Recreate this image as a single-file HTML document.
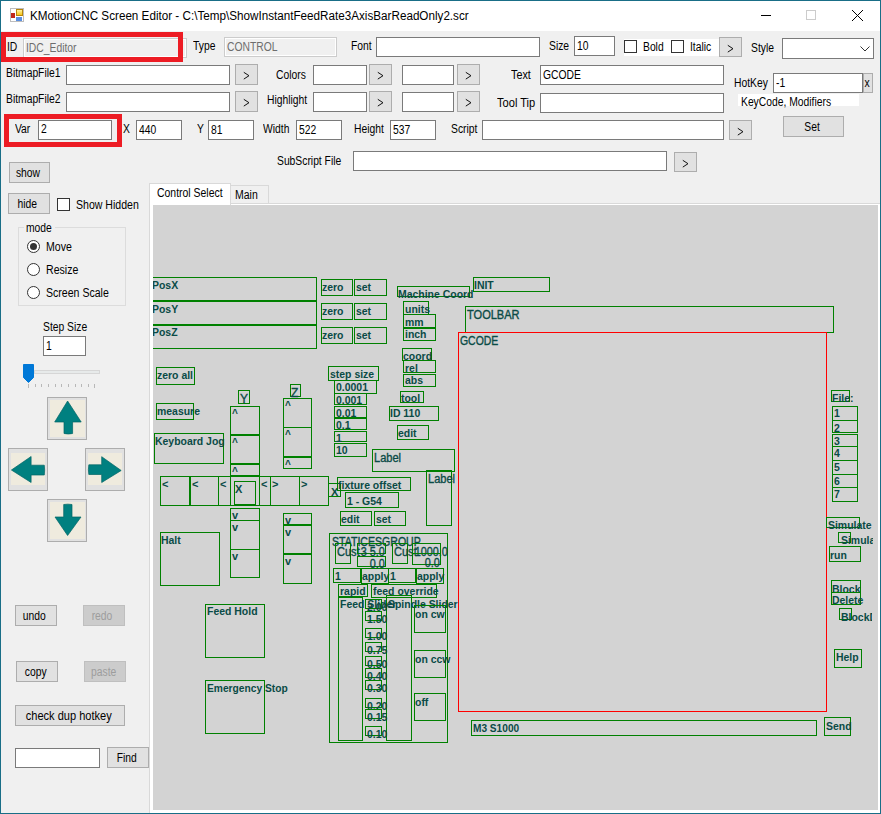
<!DOCTYPE html>
<html><head><meta charset="utf-8"><style>
html,body{margin:0;padding:0;width:881px;height:814px;overflow:hidden;background:#f0f0f0}
body{position:relative;font-family:"Liberation Sans",sans-serif}
.b{position:absolute;box-sizing:border-box}
.t{position:absolute;white-space:nowrap;line-height:normal;transform-origin:left top;font-family:"Liberation Sans",sans-serif}
.cv{position:absolute;left:153px;top:205px;width:725px;height:605px;background:#d3d3d3;overflow:hidden}
</style></head><body>
<div class=b style="left:0px;top:0px;width:881px;height:814px;background:#f0f0f0;"></div>
<div class=b style="left:1px;top:1px;width:879px;height:30px;background:#fff;"></div>
<div class=b style="left:10px;top:8px;width:14px;height:14px;border:1px solid #bdbdbd;background:#fff;"></div>
<div class=b style="left:16px;top:9px;width:7px;height:7px;border:1px solid #b8860b;background:linear-gradient(#fff3a0,#f5c518);"></div>
<div class=b style="left:11px;top:13px;width:4px;height:5px;background:#c0281c;"></div>
<div class=b style="left:16px;top:17px;width:6px;height:4px;background:#5b8fe0;"></div>
<div class=t style="left:30px;top:9px;font-size:12px;transform:scaleX(0.973);">KMotionCNC Screen Editor - C:\Temp\ShowInstantFeedRate3AxisBarReadOnly2.scr</div>
<div class=b style="left:761px;top:15px;width:10px;height:1px;background:#000;"></div>
<div class=b style="left:806px;top:10px;width:10px;height:10px;border:1px solid #cccccc;"></div>
<svg class=b style="left:852px;top:10px" width="11" height="11" viewBox="0 0 11 11"><path d="M0 0L11 11M11 0L0 11" stroke="#000" stroke-width="1"/></svg>
<div class=b style="left:23px;top:38px;width:164px;height:20px;border:1px solid #cccccc;background:#f0f0f0;box-shadow:inset 1px 1px 0 #fff,inset -1px -1px 0 #fff;"></div>
<div class=t style="left:26px;top:41px;font-size:12px;color:#6d6d6d;transform:scaleX(0.86);">IDC_Editor</div>
<div class=b style="left:1px;top:32px;width:182px;height:30px;border:5px solid #ed1c24;"></div>
<div class=t style="left:7px;top:40px;font-size:12px;transform:scaleX(0.86);">ID</div>
<div class=t style="left:193px;top:39px;font-size:12px;transform:scaleX(0.86);">Type</div>
<div class=b style="left:224px;top:37px;width:113px;height:20px;border:1px solid #cccccc;background:#f0f0f0;box-shadow:inset 1px 1px 0 #fff,inset -1px -1px 0 #fff;"></div>
<div class=t style="left:227px;top:40px;font-size:12px;color:#6d6d6d;transform:scaleX(0.86);">CONTROL</div>
<div class=t style="left:351px;top:39px;font-size:12px;transform:scaleX(0.86);">Font</div>
<div class=b style="left:376px;top:37px;width:164px;height:20px;border:1px solid #7a7a7a;background:#fff;"></div>
<div class=t style="left:549px;top:39px;font-size:12px;transform:scaleX(0.86);">Size</div>
<div class=b style="left:574px;top:36px;width:41px;height:20px;border:1px solid #7a7a7a;background:#fff;"></div>
<div class=t style="left:577px;top:39px;font-size:12px;transform:scaleX(0.86);">10</div>
<div class=b style="left:624px;top:39px;width:95px;height:17px;background:#fff;"></div>
<div class=b style="left:624px;top:40px;width:13px;height:13px;border:1px solid #333;"></div>
<div class=t style="left:643px;top:40px;font-size:12px;transform:scaleX(0.86);">Bold</div>
<div class=b style="left:671px;top:40px;width:13px;height:13px;border:1px solid #333;"></div>
<div class=t style="left:690px;top:40px;font-size:12px;transform:scaleX(0.86);">Italic</div>
<div class=b style="left:719px;top:37px;width:23px;height:20px;border:1px solid #adadad;background:#e1e1e1;"></div>
<svg class=b style="left:727px;top:44px" width="8" height="9" viewBox="0 0 8 9"><path d="M0.8 1.3L6 4.7L0.8 8.1" stroke="#111" fill="none" stroke-width="1"/></svg>
<div class=t style="left:751px;top:41px;font-size:12px;transform:scaleX(0.86);">Style</div>
<div class=b style="left:782px;top:38px;width:92px;height:21px;border:1px solid #7a7a7a;background:#fff;"></div>
<svg class=b style="left:860px;top:46px" width="10" height="6" viewBox="0 0 10 6"><path d="M0.5 0.5L5 5L9.5 0.5" stroke="#333" fill="none" stroke-width="1"/></svg>
<div class=t style="left:6px;top:66px;font-size:12px;transform:scaleX(0.86);">BitmapFile1</div>
<div class=b style="left:66px;top:65px;width:164px;height:20px;border:1px solid #7a7a7a;background:#fff;"></div>
<div class=b style="left:235px;top:64px;width:23px;height:21px;border:1px solid #adadad;background:#e1e1e1;"></div>
<svg class=b style="left:243px;top:71px" width="8" height="9" viewBox="0 0 8 9"><path d="M0.8 1.3L6 4.7L0.8 8.1" stroke="#111" fill="none" stroke-width="1"/></svg>
<div class=t style="left:276px;top:68px;font-size:12px;transform:scaleX(0.86);">Colors</div>
<div class=b style="left:313px;top:65px;width:54px;height:20px;border:1px solid #7a7a7a;background:#fff;"></div>
<div class=b style="left:369px;top:64px;width:23px;height:21px;border:1px solid #adadad;background:#e1e1e1;"></div>
<svg class=b style="left:377px;top:71px" width="8" height="9" viewBox="0 0 8 9"><path d="M0.8 1.3L6 4.7L0.8 8.1" stroke="#111" fill="none" stroke-width="1"/></svg>
<div class=b style="left:402px;top:65px;width:52px;height:20px;border:1px solid #7a7a7a;background:#fff;"></div>
<div class=b style="left:457px;top:64px;width:23px;height:21px;border:1px solid #adadad;background:#e1e1e1;"></div>
<svg class=b style="left:465px;top:71px" width="8" height="9" viewBox="0 0 8 9"><path d="M0.8 1.3L6 4.7L0.8 8.1" stroke="#111" fill="none" stroke-width="1"/></svg>
<div class=t style="left:511px;top:68px;font-size:12px;transform:scaleX(0.9);">Text</div>
<div class=b style="left:540px;top:65px;width:184px;height:20px;border:1px solid #7a7a7a;background:#fff;"></div>
<div class=t style="left:543px;top:68px;font-size:12px;transform:scaleX(0.86);">GCODE</div>
<div class=t style="left:734px;top:76px;font-size:12px;transform:scaleX(0.86);">HotKey</div>
<div class=b style="left:773px;top:73px;width:90px;height:20px;border:1px solid #7a7a7a;background:#fff;"></div>
<div class=t style="left:776px;top:76px;font-size:12px;transform:scaleX(0.86);">-1</div>
<div class=b style="left:863px;top:73px;width:10px;height:20px;border:1px solid #adadad;background:#e1e1e1;"></div>
<div class=t style="left:861px;width:11px;top:76px;font-size:12px;text-align:center;"><span style="display:inline-block;transform:scaleX(0.86)">x</span></div>
<div class=t style="left:6px;top:92px;font-size:12px;transform:scaleX(0.86);">BitmapFile2</div>
<div class=b style="left:66px;top:92px;width:164px;height:20px;border:1px solid #7a7a7a;background:#fff;"></div>
<div class=b style="left:235px;top:91px;width:23px;height:21px;border:1px solid #adadad;background:#e1e1e1;"></div>
<svg class=b style="left:243px;top:98px" width="8" height="9" viewBox="0 0 8 9"><path d="M0.8 1.3L6 4.7L0.8 8.1" stroke="#111" fill="none" stroke-width="1"/></svg>
<div class=t style="left:267px;top:93px;font-size:12px;transform:scaleX(0.86);">Highlight</div>
<div class=b style="left:313px;top:92px;width:54px;height:20px;border:1px solid #7a7a7a;background:#fff;"></div>
<div class=b style="left:369px;top:91px;width:23px;height:21px;border:1px solid #adadad;background:#e1e1e1;"></div>
<svg class=b style="left:377px;top:98px" width="8" height="9" viewBox="0 0 8 9"><path d="M0.8 1.3L6 4.7L0.8 8.1" stroke="#111" fill="none" stroke-width="1"/></svg>
<div class=b style="left:402px;top:92px;width:52px;height:20px;border:1px solid #7a7a7a;background:#fff;"></div>
<div class=b style="left:457px;top:91px;width:23px;height:21px;border:1px solid #adadad;background:#e1e1e1;"></div>
<svg class=b style="left:465px;top:98px" width="8" height="9" viewBox="0 0 8 9"><path d="M0.8 1.3L6 4.7L0.8 8.1" stroke="#111" fill="none" stroke-width="1"/></svg>
<div class=t style="left:497px;top:96px;font-size:12px;transform:scaleX(0.925);">Tool Tip</div>
<div class=b style="left:540px;top:93px;width:184px;height:20px;border:1px solid #7a7a7a;background:#fff;"></div>
<div class=b style="left:738px;top:94px;width:121px;height:12px;background:#fff;"></div>
<div class=t style="left:741px;top:95px;font-size:12px;transform:scaleX(0.86);">KeyCode, Modifiers</div>
<div class=b style="left:4px;top:114px;width:118px;height:33px;border:5px solid #ed1c24;"></div>
<div class=t style="left:15px;top:122px;font-size:12px;transform:scaleX(0.86);">Var</div>
<div class=b style="left:38px;top:120px;width:74px;height:20px;border:1px solid #7a7a7a;background:#fff;"></div>
<div class=t style="left:41px;top:122px;font-size:12px;transform:scaleX(0.86);">2</div>
<div class=t style="left:123px;top:122px;font-size:12px;transform:scaleX(0.86);">X</div>
<div class=b style="left:136px;top:120px;width:46px;height:20px;border:1px solid #7a7a7a;background:#fff;"></div>
<div class=t style="left:139px;top:123px;font-size:12px;transform:scaleX(0.86);">440</div>
<div class=t style="left:197px;top:122px;font-size:12px;transform:scaleX(0.86);">Y</div>
<div class=b style="left:208px;top:120px;width:46px;height:20px;border:1px solid #7a7a7a;background:#fff;"></div>
<div class=t style="left:211px;top:123px;font-size:12px;transform:scaleX(0.86);">81</div>
<div class=t style="left:263px;top:122px;font-size:12px;transform:scaleX(0.86);">Width</div>
<div class=b style="left:296px;top:120px;width:46px;height:20px;border:1px solid #7a7a7a;background:#fff;"></div>
<div class=t style="left:299px;top:123px;font-size:12px;transform:scaleX(0.86);">522</div>
<div class=t style="left:354px;top:122px;font-size:12px;transform:scaleX(0.86);">Height</div>
<div class=b style="left:390px;top:120px;width:46px;height:20px;border:1px solid #7a7a7a;background:#fff;"></div>
<div class=t style="left:393px;top:123px;font-size:12px;transform:scaleX(0.86);">537</div>
<div class=t style="left:451px;top:122px;font-size:12px;transform:scaleX(0.86);">Script</div>
<div class=b style="left:482px;top:120px;width:242px;height:20px;border:1px solid #7a7a7a;background:#fff;"></div>
<div class=b style="left:729px;top:120px;width:23px;height:20px;border:1px solid #adadad;background:#e1e1e1;"></div>
<svg class=b style="left:737px;top:127px" width="8" height="9" viewBox="0 0 8 9"><path d="M0.8 1.3L6 4.7L0.8 8.1" stroke="#111" fill="none" stroke-width="1"/></svg>
<div class=b style="left:783px;top:116px;width:61px;height:21px;border:1px solid #adadad;background:#e1e1e1;"></div>
<div class=t style="left:781px;width:62px;top:120px;font-size:12px;text-align:center;"><span style="display:inline-block;transform:scaleX(0.86)">Set</span></div>
<div class=t style="left:277px;top:154px;font-size:12px;transform:scaleX(0.86);">SubScript File</div>
<div class=b style="left:353px;top:151px;width:314px;height:20px;border:1px solid #7a7a7a;background:#fff;"></div>
<div class=b style="left:674px;top:152px;width:23px;height:20px;border:1px solid #adadad;background:#e1e1e1;"></div>
<svg class=b style="left:682px;top:159px" width="8" height="9" viewBox="0 0 8 9"><path d="M0.8 1.3L6 4.7L0.8 8.1" stroke="#111" fill="none" stroke-width="1"/></svg>
<div class=b style="left:9px;top:162px;width:41px;height:21px;border:1px solid #adadad;background:#e1e1e1;"></div>
<div class=t style="left:7px;width:42px;top:166px;font-size:12px;text-align:center;"><span style="display:inline-block;transform:scaleX(0.86)">show</span></div>
<div class=b style="left:8px;top:193px;width:42px;height:21px;border:1px solid #adadad;background:#e1e1e1;"></div>
<div class=t style="left:6px;width:43px;top:197px;font-size:12px;text-align:center;"><span style="display:inline-block;transform:scaleX(0.86)">hide</span></div>
<div class=b style="left:57px;top:198px;width:13px;height:13px;border:1px solid #333;background:#fff;"></div>
<div class=t style="left:76px;top:198px;font-size:12px;transform:scaleX(0.88);">Show Hidden</div>
<div class=b style="left:18px;top:227px;width:108px;height:79px;border:1px solid #dcdcdc;"></div>
<div class=b style="left:24px;top:222px;width:31px;height:11px;background:#f0f0f0;"></div>
<div class=t style="left:26px;top:221px;font-size:12px;transform:scaleX(0.86);">mode</div>
<div class=b style="left:27px;top:240px;width:13px;height:13px;border:1px solid #333;border-radius:50%;box-sizing:border-box;background:#fff"></div>
<div class=t style="left:46px;top:240px;font-size:12px;transform:scaleX(0.88);">Move</div>
<div class=b style="left:27px;top:263px;width:13px;height:13px;border:1px solid #333;border-radius:50%;box-sizing:border-box;background:#fff"></div>
<div class=t style="left:46px;top:263px;font-size:12px;transform:scaleX(0.88);">Resize</div>
<div class=b style="left:27px;top:286px;width:13px;height:13px;border:1px solid #333;border-radius:50%;box-sizing:border-box;background:#fff"></div>
<div class=t style="left:46px;top:286px;font-size:12px;transform:scaleX(0.88);">Screen Scale</div>
<div class=b style="left:30px;top:243px;width:7px;height:7px;border-radius:50%;background:#333"></div>
<div class=t style="left:43px;top:320px;font-size:12px;transform:scaleX(0.86);">Step Size</div>
<div class=b style="left:43px;top:336px;width:43px;height:20px;border:1px solid #7a7a7a;background:#fff;"></div>
<div class=t style="left:46px;top:339px;font-size:12px;transform:scaleX(0.86);">1</div>
<div class=b style="left:34px;top:370px;width:66px;height:4px;border:1px solid #d6d6d6;background:#e7eaea;"></div>
<svg class=b style="left:23px;top:364px" width="12" height="20" viewBox="0 0 12 20"><path d="M0.5 0.5H10.5V13.5L5.5 18.5L0.5 13.5Z" fill="#0078d7" stroke="#0078d7"/></svg>
<div class=b style="left:28px;top:384px;width:1px;height:4px;background:#b8b8b8;"></div>
<div class=b style="left:35px;top:384px;width:1px;height:3px;background:#b8b8b8;"></div>
<div class=b style="left:41px;top:384px;width:1px;height:3px;background:#b8b8b8;"></div>
<div class=b style="left:48px;top:384px;width:1px;height:3px;background:#b8b8b8;"></div>
<div class=b style="left:55px;top:384px;width:1px;height:3px;background:#b8b8b8;"></div>
<div class=b style="left:61px;top:384px;width:1px;height:3px;background:#b8b8b8;"></div>
<div class=b style="left:68px;top:384px;width:1px;height:3px;background:#b8b8b8;"></div>
<div class=b style="left:75px;top:384px;width:1px;height:3px;background:#b8b8b8;"></div>
<div class=b style="left:81px;top:384px;width:1px;height:3px;background:#b8b8b8;"></div>
<div class=b style="left:88px;top:384px;width:1px;height:3px;background:#b8b8b8;"></div>
<div class=b style="left:94px;top:384px;width:1px;height:4px;background:#b8b8b8;"></div>
<div class=b style="left:47px;top:397px;width:40px;height:43px;border:1px solid #adadad;background:#e1e1e1;"></div>
<div class=b style="left:50px;top:400px;width:35px;height:37px;background:#efebde;"></div>
<svg class=b style="left:47px;top:397px" width="40" height="43" viewBox="0 0 40 43"><path d="M20.6 4 L34.2 25 L25.6 25 L25.6 36.5 Q21.3 37.5 17 36.5 L17 25 L7.7 25 Z" fill="#008080" stroke="#006464" stroke-width="0.7" stroke-linejoin="round"/></svg>
<div class=b style="left:47px;top:499px;width:40px;height:43px;border:1px solid #adadad;background:#e1e1e1;"></div>
<div class=b style="left:50px;top:502px;width:35px;height:37px;background:#efebde;"></div>
<svg class=b style="left:47px;top:499px" width="40" height="43" viewBox="0 0 40 43"><path d="M20.6 36.5 L34 18 L25 18 L25 5.5 Q20.8 4.8 16.7 5.5 L16.7 18 L8 18 Z" fill="#008080" stroke="#006464" stroke-width="0.7" stroke-linejoin="round"/></svg>
<div class=b style="left:8px;top:448px;width:40px;height:43px;border:1px solid #adadad;background:#e1e1e1;"></div>
<div class=b style="left:11px;top:453px;width:34px;height:32px;background:#efebde;"></div>
<svg class=b style="left:8px;top:448px" width="40" height="43" viewBox="0 0 40 43"><path d="M3.4 22 L23.1 8.5 L23.1 17.2 L36.3 17.2 Q37 22 36.3 27 L23.1 27 L23.1 34.5 Z" fill="#008080" stroke="#006464" stroke-width="0.7" stroke-linejoin="round"/></svg>
<div class=b style="left:85px;top:448px;width:40px;height:43px;border:1px solid #adadad;background:#e1e1e1;"></div>
<div class=b style="left:88px;top:453px;width:34px;height:32px;background:#efebde;"></div>
<svg class=b style="left:85px;top:448px" width="40" height="43" viewBox="0 0 40 43"><path d="M36.2 22.5 L16.7 8.7 L16.7 16.8 L3.8 16.8 Q3 21.6 3.8 26.5 L16.7 26.5 L16.7 34.5 Z" fill="#008080" stroke="#006464" stroke-width="0.7" stroke-linejoin="round"/></svg>
<div class=b style="left:15px;top:605px;width:42px;height:21px;border:1px solid #adadad;background:#e1e1e1;"></div>
<div class=t style="left:13px;width:43px;top:609px;font-size:12px;text-align:center;"><span style="display:inline-block;transform:scaleX(0.86)">undo</span></div>
<div class=b style="left:83px;top:605px;width:42px;height:21px;border:1px solid #bfbfbf;background:#cccccc;"></div>
<div class=t style="left:81px;width:43px;top:609px;font-size:12px;text-align:center;color:#9d9d9d;"><span style="display:inline-block;transform:scaleX(0.86)">redo</span></div>
<div class=b style="left:16px;top:661px;width:42px;height:21px;border:1px solid #adadad;background:#e1e1e1;"></div>
<div class=t style="left:14px;width:43px;top:665px;font-size:12px;text-align:center;"><span style="display:inline-block;transform:scaleX(0.86)">copy</span></div>
<div class=b style="left:84px;top:661px;width:42px;height:21px;border:1px solid #bfbfbf;background:#cccccc;"></div>
<div class=t style="left:82px;width:43px;top:665px;font-size:12px;text-align:center;color:#9d9d9d;"><span style="display:inline-block;transform:scaleX(0.86)">paste</span></div>
<div class=b style="left:15px;top:705px;width:110px;height:21px;border:1px solid #adadad;background:#e1e1e1;"></div>
<div class=t style="left:13px;width:111px;top:709px;font-size:12px;text-align:center;"><span style="display:inline-block;transform:scaleX(0.92)">check dup hotkey</span></div>
<div class=b style="left:15px;top:748px;width:85px;height:20px;border:1px solid #7a7a7a;background:#fff;"></div>
<div class=b style="left:107px;top:747px;width:42px;height:21px;border:1px solid #adadad;background:#e1e1e1;"></div>
<div class=t style="left:105px;width:43px;top:751px;font-size:12px;text-align:center;"><span style="display:inline-block;transform:scaleX(0.86)">Find</span></div>
<div class=b style="left:149px;top:203px;width:732px;height:611px;border:1px solid #d9d9d9;background:#fff;"></div>
<div class=b style="left:149px;top:183px;width:82px;height:22px;border:1px solid #d9d9d9;background:#fff;border-bottom:none;"></div>
<div class=b style="left:230px;top:185px;width:39px;height:19px;border:1px solid #d9d9d9;background:#f0f0f0;"></div>
<div class=t style="left:157px;top:186px;font-size:12px;transform:scaleX(0.87);">Control Select</div>
<div class=t style="left:235px;top:188px;font-size:12px;transform:scaleX(0.875);">Main</div>
<div class=cv>
<div class=b style="left:-3px;top:72px;width:167px;height:24px;border:1px solid #008000;"></div>
<div class=t style="left:-1px;top:74px;font-size:11px;font-weight:bold;color:#0a4b46;transform:scaleX(0.95);">PosX</div>
<div class=b style="left:-3px;top:96px;width:167px;height:24px;border:1px solid #008000;"></div>
<div class=t style="left:-1px;top:98px;font-size:11px;font-weight:bold;color:#0a4b46;transform:scaleX(0.95);">PosY</div>
<div class=b style="left:-3px;top:120px;width:167px;height:24px;border:1px solid #008000;"></div>
<div class=t style="left:-1px;top:121px;font-size:11px;font-weight:bold;color:#0a4b46;transform:scaleX(0.95);">PosZ</div>
<div class=b style="left:168px;top:74px;width:32px;height:17px;border:1px solid #008000;"></div>
<div class=t style="left:169px;top:76px;font-size:11px;font-weight:bold;color:#0a4b46;transform:scaleX(0.95);">zero</div>
<div class=b style="left:201px;top:74px;width:33px;height:17px;border:1px solid #008000;"></div>
<div class=t style="left:203px;top:76px;font-size:11px;font-weight:bold;color:#0a4b46;transform:scaleX(0.95);">set</div>
<div class=b style="left:168px;top:98px;width:32px;height:17px;border:1px solid #008000;"></div>
<div class=t style="left:169px;top:100px;font-size:11px;font-weight:bold;color:#0a4b46;transform:scaleX(0.95);">zero</div>
<div class=b style="left:201px;top:98px;width:33px;height:17px;border:1px solid #008000;"></div>
<div class=t style="left:203px;top:100px;font-size:11px;font-weight:bold;color:#0a4b46;transform:scaleX(0.95);">set</div>
<div class=b style="left:168px;top:122px;width:32px;height:17px;border:1px solid #008000;"></div>
<div class=t style="left:169px;top:124px;font-size:11px;font-weight:bold;color:#0a4b46;transform:scaleX(0.95);">zero</div>
<div class=b style="left:201px;top:122px;width:33px;height:17px;border:1px solid #008000;"></div>
<div class=t style="left:203px;top:124px;font-size:11px;font-weight:bold;color:#0a4b46;transform:scaleX(0.95);">set</div>
<div class=b style="left:244px;top:81px;width:73px;height:11px;border:1px solid #008000;"></div>
<div class=t style="left:245px;top:83px;font-size:11px;font-weight:bold;color:#0a4b46;transform:scaleX(0.95);">Machine Coord</div>
<div class=b style="left:320px;top:72px;width:77px;height:15px;border:1px solid #008000;"></div>
<div class=t style="left:321px;top:74px;font-size:11px;font-weight:bold;color:#0a4b46;transform:scaleX(0.95);">INIT</div>
<div class=b style="left:250px;top:96px;width:26px;height:14px;border:1px solid #008000;"></div>
<div class=t style="left:252px;top:98px;font-size:11px;font-weight:bold;color:#0a4b46;transform:scaleX(0.95);">units</div>
<div class=b style="left:250px;top:109px;width:33px;height:14px;border:1px solid #008000;"></div>
<div class=t style="left:252px;top:111px;font-size:11px;font-weight:bold;color:#0a4b46;transform:scaleX(0.95);">mm</div>
<div class=b style="left:250px;top:123px;width:33px;height:13px;border:1px solid #008000;"></div>
<div class=t style="left:252px;top:123px;font-size:11px;font-weight:bold;color:#0a4b46;transform:scaleX(0.95);">inch</div>
<div class=b style="left:249px;top:143px;width:30px;height:13px;border:1px solid #008000;"></div>
<div class=t style="left:250px;top:145px;font-size:11px;font-weight:bold;color:#0a4b46;transform:scaleX(0.95);">coord</div>
<div class=b style="left:250px;top:155px;width:33px;height:13px;border:1px solid #008000;"></div>
<div class=t style="left:252px;top:157px;font-size:11px;font-weight:bold;color:#0a4b46;transform:scaleX(0.95);">rel</div>
<div class=b style="left:250px;top:169px;width:33px;height:13px;border:1px solid #008000;"></div>
<div class=t style="left:252px;top:169px;font-size:11px;font-weight:bold;color:#0a4b46;transform:scaleX(0.95);">abs</div>
<div class=b style="left:312px;top:101px;width:369px;height:27px;border:1px solid #008000;"></div>
<div class=t style="left:314px;top:103px;font-size:12px;color:#0a4b46;transform:scaleX(0.92);-webkit-text-stroke:0.35px #0a4b46;">TOOLBAR</div>
<div class=b style="left:305px;top:127px;width:369px;height:380px;border:1px solid #ff0000;"></div>
<div class=t style="left:307px;top:129px;font-size:12px;color:#0a4b46;transform:scaleX(0.87);-webkit-text-stroke:0.35px #0a4b46;">GCODE</div>
<div class=b style="left:175px;top:161px;width:51px;height:15px;border:1px solid #008000;"></div>
<div class=t style="left:177px;top:163px;font-size:11px;font-weight:bold;color:#0a4b46;transform:scaleX(0.95);">step size</div>
<div class=b style="left:181px;top:175px;width:43px;height:14px;border:1px solid #008000;"></div>
<div class=t style="left:183px;top:176px;font-size:11px;font-weight:bold;color:#0a4b46;transform:scaleX(0.95);">0.0001</div>
<div class=b style="left:181px;top:188px;width:33px;height:12px;border:1px solid #008000;"></div>
<div class=t style="left:183px;top:189px;font-size:11px;font-weight:bold;color:#0a4b46;transform:scaleX(0.95);">0.001</div>
<div class=b style="left:181px;top:201px;width:33px;height:12px;border:1px solid #008000;"></div>
<div class=t style="left:183px;top:202px;font-size:11px;font-weight:bold;color:#0a4b46;transform:scaleX(0.95);">0.01</div>
<div class=b style="left:181px;top:213px;width:33px;height:12px;border:1px solid #008000;"></div>
<div class=t style="left:183px;top:214px;font-size:11px;font-weight:bold;color:#0a4b46;transform:scaleX(0.95);">0.1</div>
<div class=b style="left:181px;top:226px;width:33px;height:11px;border:1px solid #008000;"></div>
<div class=t style="left:183px;top:227px;font-size:11px;font-weight:bold;color:#0a4b46;transform:scaleX(0.95);">1</div>
<div class=b style="left:181px;top:238px;width:33px;height:14px;border:1px solid #008000;"></div>
<div class=t style="left:183px;top:239px;font-size:11px;font-weight:bold;color:#0a4b46;transform:scaleX(0.95);">10</div>
<div class=b style="left:247px;top:186px;width:24px;height:12px;border:1px solid #008000;"></div>
<div class=t style="left:248px;top:187px;font-size:11px;font-weight:bold;color:#0a4b46;transform:scaleX(0.95);">tool</div>
<div class=b style="left:236px;top:201px;width:50px;height:15px;border:1px solid #008000;"></div>
<div class=t style="left:237px;top:202px;font-size:11px;font-weight:bold;color:#0a4b46;transform:scaleX(0.95);">ID 110</div>
<div class=b style="left:244px;top:220px;width:32px;height:15px;border:1px solid #008000;"></div>
<div class=t style="left:245px;top:222px;font-size:11px;font-weight:bold;color:#0a4b46;transform:scaleX(0.95);">edit</div>
<div class=b style="left:219px;top:244px;width:83px;height:23px;border:1px solid #008000;"></div>
<div class=t style="left:221px;top:246px;font-size:12px;color:#0a4b46;transform:scaleX(0.92);-webkit-text-stroke:0.35px #0a4b46;">Label</div>
<div class=b style="left:273px;top:265px;width:26px;height:56px;border:1px solid #008000;"></div>
<div class=t style="left:275px;top:267px;font-size:12px;color:#0a4b46;transform:scaleX(0.92);-webkit-text-stroke:0.35px #0a4b46;">Label</div>
<div class=b style="left:3px;top:162px;width:39px;height:18px;border:1px solid #008000;"></div>
<div class=t style="left:4px;top:164px;font-size:11px;font-weight:bold;color:#0a4b46;transform:scaleX(0.95);">zero all</div>
<div class=b style="left:3px;top:198px;width:38px;height:17px;border:1px solid #008000;"></div>
<div class=t style="left:4px;top:200px;font-size:11px;font-weight:bold;color:#0a4b46;transform:scaleX(0.95);">measure</div>
<div class=b style="left:1px;top:228px;width:70px;height:31px;border:1px solid #008000;"></div>
<div class=t style="left:2px;top:230px;font-size:11px;font-weight:bold;color:#0a4b46;transform:scaleX(0.95);">Keyboard Jog</div>
<div class=b style="left:85px;top:185px;width:12px;height:14px;border:1px solid #008000;"></div>
<div class=t style="left:87px;top:187px;font-size:12px;color:#0a4b46;-webkit-text-stroke:0.35px #0a4b46;">Y</div>
<div class=b style="left:137px;top:179px;width:11px;height:13px;border:1px solid #008000;"></div>
<div class=t style="left:138px;top:181px;font-size:12px;color:#0a4b46;-webkit-text-stroke:0.35px #0a4b46;">Z</div>
<div class=b style="left:77px;top:201px;width:30px;height:29px;border:1px solid #008000;"></div>
<div class=t style="left:79px;top:203px;font-size:10px;font-weight:bold;color:#0a4b46;">^</div>
<div class=b style="left:77px;top:230px;width:30px;height:29px;border:1px solid #008000;"></div>
<div class=t style="left:79px;top:232px;font-size:10px;font-weight:bold;color:#0a4b46;">^</div>
<div class=b style="left:77px;top:259px;width:30px;height:12px;border:1px solid #008000;"></div>
<div class=t style="left:79px;top:261px;font-size:10px;font-weight:bold;color:#0a4b46;">^</div>
<div class=b style="left:130px;top:193px;width:29px;height:30px;border:1px solid #008000;"></div>
<div class=t style="left:132px;top:195px;font-size:10px;font-weight:bold;color:#0a4b46;">^</div>
<div class=b style="left:130px;top:222px;width:29px;height:30px;border:1px solid #008000;"></div>
<div class=t style="left:132px;top:224px;font-size:10px;font-weight:bold;color:#0a4b46;">^</div>
<div class=b style="left:130px;top:252px;width:29px;height:12px;border:1px solid #008000;"></div>
<div class=t style="left:132px;top:254px;font-size:10px;font-weight:bold;color:#0a4b46;">^</div>
<div class=b style="left:7px;top:271px;width:30px;height:30px;border:1px solid #008000;"></div>
<div class=t style="left:9px;top:273px;font-size:11px;font-weight:bold;color:#0a4b46;">&lt;</div>
<div class=b style="left:37px;top:271px;width:29px;height:30px;border:1px solid #008000;"></div>
<div class=t style="left:39px;top:273px;font-size:11px;font-weight:bold;color:#0a4b46;">&lt;</div>
<div class=b style="left:65px;top:271px;width:13px;height:30px;border:1px solid #008000;"></div>
<div class=t style="left:67px;top:273px;font-size:11px;font-weight:bold;color:#0a4b46;">&lt;</div>
<div class=b style="left:77px;top:271px;width:30px;height:30px;border:1px solid #008000;"></div>
<div class=b style="left:106px;top:271px;width:12px;height:30px;border:1px solid #008000;"></div>
<div class=t style="left:108px;top:273px;font-size:11px;font-weight:bold;color:#0a4b46;">&lt;</div>
<div class=b style="left:117px;top:271px;width:30px;height:30px;border:1px solid #008000;"></div>
<div class=t style="left:119px;top:273px;font-size:11px;font-weight:bold;color:#0a4b46;">&gt;</div>
<div class=b style="left:146px;top:271px;width:30px;height:30px;border:1px solid #008000;"></div>
<div class=t style="left:148px;top:273px;font-size:11px;font-weight:bold;color:#0a4b46;">&gt;</div>
<div class=b style="left:81px;top:276px;width:22px;height:24px;border:1px solid #008000;"></div>
<div class=t style="left:82px;top:278px;font-size:11px;font-weight:bold;color:#0a4b46;">X</div>
<div class=b style="left:175px;top:278px;width:13px;height:14px;border:1px solid #008000;"></div>
<div class=t style="left:178px;top:281px;font-size:11px;font-weight:bold;color:#0a4b46;">X</div>
<div class=b style="left:77px;top:303px;width:30px;height:13px;border:1px solid #008000;"></div>
<div class=t style="left:79px;top:304px;font-size:11px;font-weight:bold;color:#0a4b46;">v</div>
<div class=b style="left:77px;top:315px;width:30px;height:30px;border:1px solid #008000;"></div>
<div class=t style="left:79px;top:316px;font-size:11px;font-weight:bold;color:#0a4b46;">v</div>
<div class=b style="left:77px;top:344px;width:30px;height:29px;border:1px solid #008000;"></div>
<div class=t style="left:79px;top:345px;font-size:11px;font-weight:bold;color:#0a4b46;">v</div>
<div class=b style="left:130px;top:308px;width:29px;height:12px;border:1px solid #008000;"></div>
<div class=t style="left:132px;top:309px;font-size:11px;font-weight:bold;color:#0a4b46;">v</div>
<div class=b style="left:130px;top:320px;width:29px;height:29px;border:1px solid #008000;"></div>
<div class=t style="left:132px;top:321px;font-size:11px;font-weight:bold;color:#0a4b46;">v</div>
<div class=b style="left:130px;top:349px;width:29px;height:30px;border:1px solid #008000;"></div>
<div class=t style="left:132px;top:350px;font-size:11px;font-weight:bold;color:#0a4b46;">v</div>
<div class=b style="left:7px;top:327px;width:60px;height:54px;border:1px solid #008000;"></div>
<div class=t style="left:8px;top:329px;font-size:11px;font-weight:bold;color:#0a4b46;transform:scaleX(0.95);">Halt</div>
<div class=b style="left:184px;top:272px;width:74px;height:14px;border:1px solid #008000;"></div>
<div class=t style="left:185px;top:274px;font-size:11px;font-weight:bold;color:#0a4b46;transform:scaleX(0.95);">fixture offset</div>
<div class=b style="left:192px;top:287px;width:54px;height:16px;border:1px solid #008000;"></div>
<div class=t style="left:194px;top:290px;font-size:11px;font-weight:bold;color:#0a4b46;transform:scaleX(0.95);">1 - G54</div>
<div class=b style="left:187px;top:306px;width:32px;height:15px;border:1px solid #008000;"></div>
<div class=t style="left:188px;top:308px;font-size:11px;font-weight:bold;color:#0a4b46;transform:scaleX(0.95);">edit</div>
<div class=b style="left:221px;top:306px;width:32px;height:15px;border:1px solid #008000;"></div>
<div class=t style="left:223px;top:308px;font-size:11px;font-weight:bold;color:#0a4b46;transform:scaleX(0.95);">set</div>
<div class=b style="left:176px;top:328px;width:119px;height:210px;border:1px solid #008000;"></div>
<div class=t style="left:179px;top:330px;font-size:12px;color:#0a4b46;transform:scaleX(0.88);-webkit-text-stroke:0.35px #0a4b46;">STATICESGROUP</div>
<div class=b style="left:182px;top:338px;width:16px;height:21px;border:1px solid #008000;"></div>
<div class=t style="left:184px;top:340px;font-size:12px;color:#0a4b46;transform:scaleX(0.92);-webkit-text-stroke:0.35px #0a4b46;">Cust</div>
<div class=b style="left:204px;top:338px;width:29px;height:11px;border:1px solid #008000;"></div>
<div class=t style="left:32px;width:200px;text-align:right;top:340px;font-size:12px;color:#0a4b46;-webkit-text-stroke:0.35px #0a4b46;"><span style="display:inline-block;transform:scaleX(0.9);transform-origin:right">3 5.0</span></div>
<div class=b style="left:204px;top:351px;width:29px;height:11px;border:1px solid #008000;"></div>
<div class=t style="left:32px;width:200px;text-align:right;top:352px;font-size:12px;color:#0a4b46;-webkit-text-stroke:0.35px #0a4b46;"><span style="display:inline-block;transform:scaleX(0.9);transform-origin:right">0.0</span></div>
<div class=b style="left:239px;top:338px;width:16px;height:21px;border:1px solid #008000;"></div>
<div class=t style="left:241px;top:340px;font-size:12px;color:#0a4b46;transform:scaleX(0.92);-webkit-text-stroke:0.35px #0a4b46;">Cust</div>
<div class=b style="left:259px;top:338px;width:29px;height:11px;border:1px solid #008000;"></div>
<div class=t style="left:95px;width:200px;text-align:right;top:340px;font-size:12px;color:#0a4b46;-webkit-text-stroke:0.35px #0a4b46;"><span style="display:inline-block;transform:scaleX(0.9);transform-origin:right">1000.0</span></div>
<div class=b style="left:259px;top:348px;width:29px;height:12px;border:1px solid #008000;"></div>
<div class=t style="left:87px;width:200px;text-align:right;top:351px;font-size:12px;color:#0a4b46;-webkit-text-stroke:0.35px #0a4b46;"><span style="display:inline-block;transform:scaleX(0.9);transform-origin:right">0.0</span></div>
<div class=b style="left:180px;top:363px;width:28px;height:15px;border:1px solid #008000;"></div>
<div class=t style="left:182px;top:365px;font-size:11px;font-weight:bold;color:#0a4b46;transform:scaleX(0.95);">1</div>
<div class=b style="left:208px;top:363px;width:28px;height:16px;border:1px solid #008000;"></div>
<div class=t style="left:209px;top:365px;font-size:11px;font-weight:bold;color:#0a4b46;transform:scaleX(0.95);">apply</div>
<div class=b style="left:235px;top:363px;width:28px;height:15px;border:1px solid #008000;"></div>
<div class=t style="left:237px;top:365px;font-size:11px;font-weight:bold;color:#0a4b46;transform:scaleX(0.95);">1</div>
<div class=b style="left:263px;top:363px;width:28px;height:16px;border:1px solid #008000;"></div>
<div class=t style="left:264px;top:365px;font-size:11px;font-weight:bold;color:#0a4b46;transform:scaleX(0.95);">apply</div>
<div class=b style="left:185px;top:379px;width:30px;height:13px;border:1px solid #008000;"></div>
<div class=t style="left:187px;top:380px;font-size:11px;font-weight:bold;color:#0a4b46;transform:scaleX(0.95);">rapid</div>
<div class=b style="left:218px;top:379px;width:66px;height:14px;border:1px solid #008000;"></div>
<div class=t style="left:220px;top:380px;font-size:11px;font-weight:bold;color:#0a4b46;transform:scaleX(0.95);">feed override</div>
<div class=b style="left:185px;top:392px;width:25px;height:144px;border:1px solid #008000;"></div>
<div class=t style="left:187px;top:393px;font-size:11px;font-weight:bold;color:#0a4b46;transform:scaleX(0.95);">Feed Slider</div>
<div class=b style="left:233px;top:390px;width:26px;height:146px;border:1px solid #008000;"></div>
<div class=t style="left:235px;top:393px;font-size:11px;font-weight:bold;color:#0a4b46;transform:scaleX(0.95);">Spindle Slider</div>
<div class=b style="left:261px;top:400px;width:32px;height:28px;border:1px solid #008000;"></div>
<div class=t style="left:262px;top:403px;font-size:11px;font-weight:bold;color:#0a4b46;transform:scaleX(0.95);">on cw</div>
<div class=b style="left:261px;top:445px;width:32px;height:28px;border:1px solid #008000;"></div>
<div class=t style="left:262px;top:448px;font-size:11px;font-weight:bold;color:#0a4b46;transform:scaleX(0.95);">on ccw</div>
<div class=b style="left:261px;top:488px;width:32px;height:28px;border:1px solid #008000;"></div>
<div class=t style="left:262px;top:491px;font-size:11px;font-weight:bold;color:#0a4b46;transform:scaleX(0.95);">off</div>
<div class=b style="left:212px;top:394px;width:17px;height:10px;border:1px solid #008000;"></div>
<div class=t style="left:214px;top:396px;font-size:11px;font-weight:bold;color:#0a4b46;transform:scaleX(0.95);">2.00</div>
<div class=b style="left:212px;top:406px;width:17px;height:10px;border:1px solid #008000;"></div>
<div class=t style="left:214px;top:408px;font-size:11px;font-weight:bold;color:#0a4b46;transform:scaleX(0.95);">1.50</div>
<div class=b style="left:212px;top:423px;width:17px;height:10px;border:1px solid #008000;"></div>
<div class=t style="left:214px;top:425px;font-size:11px;font-weight:bold;color:#0a4b46;transform:scaleX(0.95);">1.00</div>
<div class=b style="left:212px;top:437px;width:17px;height:10px;border:1px solid #008000;"></div>
<div class=t style="left:214px;top:439px;font-size:11px;font-weight:bold;color:#0a4b46;transform:scaleX(0.95);">0.75</div>
<div class=b style="left:212px;top:451px;width:17px;height:10px;border:1px solid #008000;"></div>
<div class=t style="left:214px;top:453px;font-size:11px;font-weight:bold;color:#0a4b46;transform:scaleX(0.95);">0.50</div>
<div class=b style="left:212px;top:463px;width:17px;height:10px;border:1px solid #008000;"></div>
<div class=t style="left:214px;top:465px;font-size:11px;font-weight:bold;color:#0a4b46;transform:scaleX(0.95);">0.40</div>
<div class=b style="left:212px;top:475px;width:17px;height:10px;border:1px solid #008000;"></div>
<div class=t style="left:214px;top:477px;font-size:11px;font-weight:bold;color:#0a4b46;transform:scaleX(0.95);">0.30</div>
<div class=b style="left:212px;top:493px;width:17px;height:10px;border:1px solid #008000;"></div>
<div class=t style="left:214px;top:495px;font-size:11px;font-weight:bold;color:#0a4b46;transform:scaleX(0.95);">0.20</div>
<div class=b style="left:212px;top:504px;width:17px;height:10px;border:1px solid #008000;"></div>
<div class=t style="left:214px;top:506px;font-size:11px;font-weight:bold;color:#0a4b46;transform:scaleX(0.95);">0.15</div>
<div class=b style="left:212px;top:521px;width:17px;height:10px;border:1px solid #008000;"></div>
<div class=t style="left:214px;top:523px;font-size:11px;font-weight:bold;color:#0a4b46;transform:scaleX(0.95);">0.10</div>
<div class=b style="left:52px;top:399px;width:60px;height:54px;border:1px solid #008000;"></div>
<div class=t style="left:54px;top:400px;font-size:11px;font-weight:bold;color:#0a4b46;transform:scaleX(0.95);">Feed Hold</div>
<div class=b style="left:52px;top:475px;width:60px;height:54px;border:1px solid #008000;"></div>
<div class=t style="left:54px;top:477px;font-size:11px;font-weight:bold;color:#0a4b46;transform:scaleX(0.93);">Emergency Stop</div>
<div class=b style="left:318px;top:515px;width:346px;height:16px;border:1px solid #008000;"></div>
<div class=t style="left:320px;top:517px;font-size:11px;font-weight:bold;color:#0a4b46;transform:scaleX(0.92);">M3 S1000</div>
<div class=b style="left:671px;top:512px;width:27px;height:19px;border:1px solid #008000;"></div>
<div class=t style="left:673px;top:515px;font-size:11px;font-weight:bold;color:#0a4b46;transform:scaleX(0.95);">Send</div>
<div class=b style="left:681px;top:444px;width:28px;height:19px;border:1px solid #008000;"></div>
<div class=t style="left:683px;top:446px;font-size:11px;font-weight:bold;color:#0a4b46;transform:scaleX(0.95);">Help</div>
<div class=b style="left:678px;top:185px;width:19px;height:12px;border:1px solid #008000;"></div>
<div class=t style="left:679px;top:187px;font-size:11px;font-weight:bold;color:#0a4b46;transform:scaleX(0.95);">File:</div>
<div class=b style="left:679px;top:201px;width:26px;height:15px;border:1px solid #008000;"></div>
<div class=t style="left:681px;top:202px;font-size:11px;font-weight:bold;color:#0a4b46;transform:scaleX(0.95);">1</div>
<div class=b style="left:679px;top:215px;width:26px;height:13px;border:1px solid #008000;"></div>
<div class=t style="left:681px;top:217px;font-size:11px;font-weight:bold;color:#0a4b46;transform:scaleX(0.95);">2</div>
<div class=b style="left:679px;top:229px;width:26px;height:13px;border:1px solid #008000;"></div>
<div class=t style="left:681px;top:230px;font-size:11px;font-weight:bold;color:#0a4b46;transform:scaleX(0.95);">3</div>
<div class=b style="left:679px;top:241px;width:26px;height:15px;border:1px solid #008000;"></div>
<div class=t style="left:681px;top:242px;font-size:11px;font-weight:bold;color:#0a4b46;transform:scaleX(0.95);">4</div>
<div class=b style="left:679px;top:255px;width:26px;height:15px;border:1px solid #008000;"></div>
<div class=t style="left:681px;top:256px;font-size:11px;font-weight:bold;color:#0a4b46;transform:scaleX(0.95);">5</div>
<div class=b style="left:679px;top:269px;width:26px;height:14px;border:1px solid #008000;"></div>
<div class=t style="left:681px;top:270px;font-size:11px;font-weight:bold;color:#0a4b46;transform:scaleX(0.95);">6</div>
<div class=b style="left:679px;top:282px;width:26px;height:15px;border:1px solid #008000;"></div>
<div class=t style="left:681px;top:283px;font-size:11px;font-weight:bold;color:#0a4b46;transform:scaleX(0.95);">7</div>
<div class=b style="left:673px;top:312px;width:34px;height:11px;border:1px solid #008000;"></div>
<div class=t style="left:675px;top:314px;font-size:11px;font-weight:bold;color:#0a4b46;transform:scaleX(0.95);">Simulate</div>
<div class=b style="left:685px;top:327px;width:13px;height:11px;border:1px solid #008000;"></div>
<div class=t style="left:688px;top:329px;font-size:11px;font-weight:bold;color:#0a4b46;transform:scaleX(0.95);">Simula</div>
<div class=b style="left:676px;top:341px;width:32px;height:16px;border:1px solid #008000;"></div>
<div class=t style="left:677px;top:344px;font-size:11px;font-weight:bold;color:#0a4b46;transform:scaleX(0.95);">run</div>
<div class=b style="left:678px;top:375px;width:30px;height:13px;border:1px solid #008000;"></div>
<div class=t style="left:679px;top:378px;font-size:11px;font-weight:bold;color:#0a4b46;transform:scaleX(0.95);">Block</div>
<div class=b style="left:678px;top:387px;width:30px;height:13px;border:1px solid #008000;"></div>
<div class=t style="left:679px;top:389px;font-size:11px;font-weight:bold;color:#0a4b46;transform:scaleX(0.95);">Delete</div>
<div class=b style="left:686px;top:403px;width:13px;height:12px;border:1px solid #008000;"></div>
<div class=t style="left:688px;top:406px;font-size:11px;font-weight:bold;color:#0a4b46;transform:scaleX(0.95);">BlockD</div>
<div class=b style="left:720px;top:325px;width:5px;height:17px;background:#d3d3d3;"></div>
<div class=b style="left:719px;top:401px;width:6px;height:18px;background:#d3d3d3;"></div>
</div>
<div class=b style="left:0px;top:0px;width:881px;height:814px;border:1px solid rgb(25,110,135);"></div>
</body></html>
